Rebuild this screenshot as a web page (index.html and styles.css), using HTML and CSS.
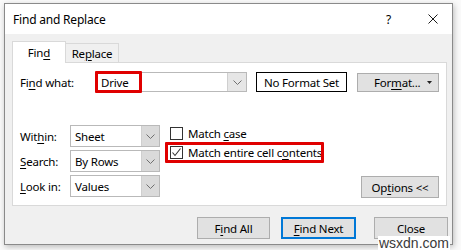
FILE: index.html
```html
<!DOCTYPE html>
<html lang="en">
<head>
    <meta charset="UTF-8">
    <title>Find and Replace</title>
    <link rel="stylesheet" href="styles.css">
</head>
<body>
    <div class="dialog">
        <div class="titlebar">
            <span class="title">Find and Replace</span>
            <span class="help">?</span>
            <svg class="close-x" width="10" height="10" viewBox="0 0 10 10">
                <path d="M0.5 0.5 L9.5 9.5 M9.5 0.5 L0.5 9.5" stroke="#1a1a1a" stroke-width="1" fill="none"/>
            </svg>
        </div>
        <div class="content">
            <div class="tabs">
                <div class="tab active">Fin<u>d</u></div>
                <div class="tab">Re<u>p</u>lace</div>
            </div>
            <div class="panel">
                <div class="find-row">
                    <span class="find-label">Fi<u>n</u>d what:</span>
                    <div class="combo">
                        <span class="combo-text">Drive</span>
                        <span class="combo-arrow">
                            <svg width="9" height="5" viewBox="0 0 9 5"><path d="M0.5 0.5 L4.5 4.5 L8.5 0.5" stroke="#707070" fill="none"/></svg>
                        </span>
                        <span class="mark mark-drive"></span>
                    </div>
                    <div class="format-status">No Format Set</div>
                    <div class="btn format-btn">
                        <span>For<u>m</u>at...</span>
                        <svg class="caret" width="5" height="3" viewBox="0 0 5 3"><path d="M0 0 H5 L2.5 3 Z" fill="#222"/></svg>
                    </div>
                </div>
                <div class="options-row">
                    <div class="selects">
                        <div class="select-row">
                            <span class="select-label">Wit<u>h</u>in:</span>
                            <div class="select">
                                <span class="select-text">Sheet</span>
                                <span class="select-arrow"><svg width="9" height="5" viewBox="0 0 9 5"><path d="M0.5 0.5 L4.5 4.5 L8.5 0.5" stroke="#707070" fill="none"/></svg></span>
                            </div>
                        </div>
                        <div class="select-row">
                            <span class="select-label"><u>S</u>earch:</span>
                            <div class="select">
                                <span class="select-text">By Rows</span>
                                <span class="select-arrow"><svg width="9" height="5" viewBox="0 0 9 5"><path d="M0.5 0.5 L4.5 4.5 L8.5 0.5" stroke="#707070" fill="none"/></svg></span>
                            </div>
                        </div>
                        <div class="select-row">
                            <span class="select-label"><u>L</u>ook in:</span>
                            <div class="select">
                                <span class="select-text">Values</span>
                                <span class="select-arrow"><svg width="9" height="5" viewBox="0 0 9 5"><path d="M0.5 0.5 L4.5 4.5 L8.5 0.5" stroke="#707070" fill="none"/></svg></span>
                            </div>
                        </div>
                    </div>
                    <div class="checks">
                        <div class="check">
                            <span class="box"></span>
                            <span>Match <u>c</u>ase</span>
                        </div>
                        <div class="check">
                            <span class="box">
                                <svg width="11" height="11" viewBox="0 0 11 11"><path d="M1.5 5.5 L4 8.5 L9.5 1.5" stroke="#333" stroke-width="1.1" fill="none"/></svg>
                            </span>
                            <span>Match entire cell c<u>o</u>ntents</span>
                            <span class="mark mark-check"></span>
                        </div>
                    </div>
                    <div class="btn options-btn">Op<u>t</u>ions &lt;&lt;</div>
                </div>
            </div>
            <div class="actions">
                <div class="btn action-btn find-all">F<u>i</u>nd All</div>
                <div class="btn action-btn find-next"><u>F</u>ind Next</div>
                <div class="btn action-btn close-btn">Close</div>
            </div>
        </div>
    </div>
    <div class="watermark">wsxdn.com</div>
</body>
</html>
```

FILE: styles.css
```css
html, body {
    margin: 0;
    padding: 0;
}
body {
    width: 461px;
    height: 250px;
    background: #fafafa;
    position: relative;
    overflow: hidden;
    font-family: 'Noto Sans', 'Open Sans', Arial, sans-serif;
    font-size: 11.5px;
    letter-spacing: -0.2px;
    color: #000;
}
u {
    text-decoration-thickness: 1px;
    text-underline-offset: 2px;
}
.dialog {
    margin: 3px 0 0 4px;
    width: 449px;
    height: 242px;
    box-sizing: border-box;
    border: 1px solid #8a8a8a;
    background: #f0f0f0;
    box-shadow: 1px 2px 6px rgba(0,0,0,0.25);
    display: flex;
    flex-direction: column;
}
.titlebar {
    height: 30px;
    background: #fff;
    display: flex;
    align-items: center;
    padding: 0 14px 0 8px;
}
.title {
    font-size: 12px;
}
.help {
    margin-left: auto;
    margin-right: 37px;
    font-size: 12px;
}
.close-x {
    display: block;
}
.content {
    padding: 7px 5px 0 7px;
}
.tabs {
    display: flex;
    align-items: flex-end;
    height: 21px;
}
.tab {
    width: 54px;
    height: 19px;
    box-sizing: border-box;
    border: 1px solid #d9d9d9;
    border-bottom: none;
    display: flex;
    align-items: center;
    justify-content: center;
    background: #f0f0f0;
    margin-left: -1px;
}
.tab.active {
    height: 22px;
    background: #fff;
    margin-left: 0;
    margin-bottom: -1px;
    position: relative;
    z-index: 1;
}
.panel {
    height: 144px;
    box-sizing: border-box;
    background: #fff;
    border: 1px solid #d9d9d9;
    padding: 9px 7px 0 7px;
    display: flex;
    flex-direction: column;
}
.find-row {
    display: flex;
    align-items: center;
    height: 20px;
}
.find-label {
    width: 76px;
}
.combo {
    position: relative;
    width: 151px;
    height: 20px;
    box-sizing: border-box;
    border: 1px solid #b9b9b9;
    display: flex;
    align-items: center;
}
.combo-text {
    flex: 1;
    padding-left: 4px;
}
.combo-arrow, .select-arrow {
    width: 18px;
    align-self: stretch;
    background: #e6e6e6;
    border-left: 1px solid #cfcfcf;
    display: flex;
    align-items: center;
    justify-content: center;
}
.mark {
    position: absolute;
    border: 3px solid #e00000;
    border-radius: 1px;
    box-sizing: border-box;
}
.mark-drive {
    left: -2px;
    top: -2px;
    width: 47px;
    height: 22px;
}
.format-status {
    margin-left: 9px;
    width: 91px;
    height: 20px;
    box-sizing: border-box;
    border: 1px solid #000;
    display: flex;
    align-items: center;
    justify-content: center;
}
.btn {
    background: #e1e1e1;
    border: 1px solid #adadad;
    box-sizing: border-box;
    display: flex;
    align-items: center;
    justify-content: center;
}
.format-btn {
    margin-left: auto;
    width: 82px;
    height: 19px;
    justify-content: flex-start;
    padding: 0 6px 0 16px;
}
.caret {
    margin-left: auto;
    display: block;
}
.options-row {
    margin-top: 33px;
    display: flex;
    align-items: flex-start;
}
.selects {
    display: flex;
    flex-direction: column;
    gap: 3px;
}
.select-row {
    display: flex;
    align-items: center;
}
.select-label {
    width: 50px;
}
.select {
    width: 90px;
    height: 22px;
    box-sizing: border-box;
    border: 1px solid #b9b9b9;
    display: flex;
    align-items: center;
}
.select-text {
    flex: 1;
    padding-left: 4px;
}
.select-arrow {
    width: 17px;
    background: #dadada;
}
.checks {
    margin-left: 10px;
    margin-top: 2px;
    display: flex;
    flex-direction: column;
    gap: 6px;
}
.check {
    position: relative;
    display: flex;
    align-items: center;
    height: 13px;
}
.box {
    width: 13px;
    height: 13px;
    box-sizing: border-box;
    border: 1px solid #333;
    margin-right: 5px;
    display: flex;
    align-items: center;
    justify-content: center;
    background: #fff;
}
.mark-check {
    left: -5px;
    top: -4px;
    width: 159px;
    height: 21px;
}
.options-btn {
    margin-left: auto;
    align-self: flex-end;
    width: 78px;
    height: 22px;
    margin-bottom: -1px;
}
.actions {
    margin-top: 11px;
    display: flex;
    justify-content: flex-end;
}
.action-btn {
    height: 22px;
}
.find-all {
    width: 73px;
}
.find-next {
    width: 75px;
    margin-left: 11px;
    border: 2px solid #0078d7;
}
.close-btn {
    width: 74px;
    margin-left: 18px;
    margin-right: -1px;
}
.watermark {
    position: absolute;
    right: 11px;
    bottom: 0;
    height: 14px;
    line-height: 14px;
    padding: 0 1px;
    background: #fff;
    font-family: 'Liberation Sans', Arial, sans-serif;
    font-size: 14px;
    letter-spacing: 0;
    color: #3a3a3a;
}
```
